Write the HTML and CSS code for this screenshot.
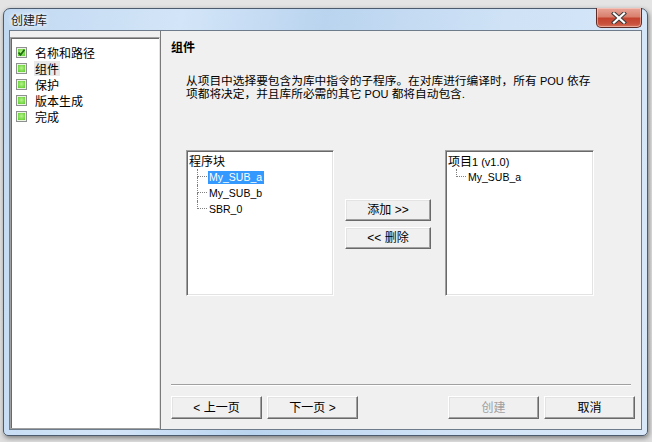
FILE: index.html
```html
<!DOCTYPE html>
<html lang="zh-CN">
<head>
<meta charset="utf-8">
<title>创建库</title>
<link rel="stylesheet" href="styles.css">
</head>
<body>
<div class="window">
  <div class="titlebar">
    <span class="title">创建库</span>
    <div class="close">
      <svg width="16" height="12" viewBox="0 0 16 12">
        <path d="M3 1.5 L13 10.5 M13 1.5 L3 10.5" stroke="#3b3b3b" stroke-width="4.2" stroke-linecap="square" fill="none"/>
        <path d="M3 1.5 L13 10.5 M13 1.5 L3 10.5" stroke="#ffffff" stroke-width="2.2" stroke-linecap="square" fill="none"/>
      </svg>
    </div>
  </div>
  <div class="client">
    <div class="nav">
      <div class="nav-item"><span class="check checked"><svg width="9" height="9" viewBox="0 0 9 9"><path d="M1.5 4.5 L3.5 6.8 L7.5 1.8" stroke="#1d6b12" stroke-width="1.8" fill="none"/></svg></span><span class="nav-label">名称和路径</span></div>
      <div class="nav-item"><span class="check"></span><span class="nav-label current">组件</span></div>
      <div class="nav-item"><span class="check"></span><span class="nav-label">保护</span></div>
      <div class="nav-item"><span class="check"></span><span class="nav-label">版本生成</span></div>
      <div class="nav-item"><span class="check"></span><span class="nav-label">完成</span></div>
    </div>
    <div class="main">
      <div class="heading">组件</div>
      <div class="desc">
        <div class="desc-line">从项目中选择要包含为库中指令的子程序。在对库进行编译时，所有 <span class="pou">POU</span> 依存</div>
        <div class="desc-line">项都将决定，并且库所必需的其它 <span class="pou">POU</span> 都将自动包含.</div>
      </div>
      <div class="picker">
        <div class="listbox left-list">
          <div class="tree-root">程序块</div>
          <div class="tree-row"><span class="conn"><span class="conn-top"></span><span class="conn-bot"></span></span><span class="leaf selected">My_SUB_a</span></div>
          <div class="tree-row"><span class="conn"><span class="conn-top"></span><span class="conn-bot"></span></span><span class="leaf">My_SUB_b</span></div>
          <div class="tree-row"><span class="conn last"><span class="conn-top"></span><span class="conn-bot"></span></span><span class="leaf">SBR_0</span></div>
        </div>
        <div class="move-buttons">
          <button class="btn move">添加 &gt;&gt;</button>
          <button class="btn move">&lt;&lt; 删除</button>
        </div>
        <div class="listbox right-list">
          <div class="tree-root">项目<span class="latin">1 (v1.0)</span></div>
          <div class="tree-row"><span class="conn last"><span class="conn-top"></span><span class="conn-bot"></span></span><span class="leaf">My_SUB_a</span></div>
        </div>
      </div>
      <div class="fill"></div>
      <div class="separator"></div>
      <div class="footer">
        <button class="btn page">&lt; 上一页</button>
        <button class="btn page">下一页 &gt;</button>
        <div class="footer-gap"></div>
        <button class="btn page disabled">创建</button>
        <button class="btn page">取消</button>
      </div>
    </div>
  </div>
</div>
</body>
</html>
```
FILE: styles.css
```css
* { box-sizing: border-box; }
html, body { margin: 0; padding: 0; }
body {
  width: 652px;
  height: 442px;
  overflow: hidden;
  background: linear-gradient(180deg, #e4e4e4 0%, #dedede 100%);
  font-family: "Liberation Sans", "Noto Sans CJK SC", sans-serif;
  font-size: 12px;
  color: #000;
}
.window {
  margin: 8px 0 0 3px;
  width: 645px;
  height: 428px;
  border: 1px solid #4c5c6e;
  border-radius: 7px 7px 5px 5px;
  background: linear-gradient(100deg, #c1d9f1 0%, #d3e5f8 25%, #bad4ef 45%, #cfe2f6 70%, #d8e8f9 100%);
  display: flex;
  flex-direction: column;
  padding: 0 5px 5px 5px;
  box-shadow: 1px 2px 5px rgba(0, 0, 0, 0.45);
}
.titlebar {
  height: 21px;
  flex: none;
  display: flex;
  align-items: flex-start;
  justify-content: space-between;
}
.title {
  font-family: "Noto Sans CJK SC", sans-serif;
  font-size: 12px;
  line-height: 14px;
  padding: 4px 0 0 2px;
  color: #1a1a1a;
  text-shadow: 0 0 4px #ffffff, 0 0 6px #ffffff;
}
.close {
  width: 46px;
  height: 20px;
  margin-top: -1px;
  border: 1px solid #5e2c27;
  border-top: none;
  border-radius: 0 0 5px 5px;
  background: linear-gradient(180deg, #e9a699 0%, #d9806f 45%, #c4432f 55%, #c9543f 85%, #d87a62 100%);
  box-shadow: inset 0 0 0 1px rgba(255, 220, 210, 0.5);
  display: flex;
  align-items: center;
  justify-content: center;
}
.client {
  flex: 1;
  display: flex;
  border: 1px solid #6d7b8b;
  background: #f0f0f0;
}
.nav {
  width: 150px;
  flex: none;
  margin-top: 6px;
  background: #fff;
  border-style: solid;
  border-width: 1px;
  border-color: #a0a0a0 #e3e3e3 #a0a0a0 #a0a0a0;
  box-shadow: inset 1px 1px 0 #696969;
  padding: 6px 0 0 5px;
}
.nav-item {
  height: 16px;
  display: flex;
  align-items: center;
}
.check {
  width: 11px;
  height: 11px;
  flex: none;
  border: 1px solid #8e8f8f;
  background: radial-gradient(circle at 50% 45%, #b8f28f 0%, #7fdc4f 45%, #47be1e 100%);
  box-shadow: inset 0 0 0 1px #e9f5e1;
  display: flex;
  align-items: center;
  justify-content: center;
}
.nav-label {
  margin-left: 7px;
  padding: 0 1px;
  font-family: "Noto Sans CJK SC", sans-serif;
  font-size: 12px;
  line-height: 15px;
}
.nav-label.current { background: #e9e9e9; }
.main {
  flex: 1;
  display: flex;
  flex-direction: column;
  padding: 8px 0 10px 10px;
  border-left: 1px solid #7a7a7a;
}
.heading {
  font-family: "Noto Sans CJK SC", sans-serif;
  font-weight: bold;
  font-size: 12px;
  line-height: 16px;
}
.desc {
  margin: 19px 0 0 15px;
  font-family: "Liberation Sans", "Noto Sans CJK SC", sans-serif;
  font-size: 11.7px;
  white-space: nowrap;
}
.desc-line {
  height: 13px;
  line-height: 13px;
}
.pou {
  font-size: 11px;
}
.picker {
  display: flex;
  align-items: flex-start;
  margin: 50px 0 0 15px;
}
.listbox {
  height: 146px;
  background: #fff;
  border-style: solid;
  border-width: 1px;
  border-color: #a0a0a0 #ffffff #ffffff #a0a0a0;
  box-shadow: inset 1px 1px 0 #696969, inset -1px -1px 0 #e3e3e3;
  padding: 2px 0 0 2px;
  font-size: 11px;
}
.left-list { width: 148px; }
.right-list { width: 149px; margin-left: 14px; }
.tree-root {
  height: 16px;
  line-height: 16px;
  font-family: "Noto Sans CJK SC", sans-serif;
  font-size: 12px;
}
.latin {
  font-family: "Liberation Sans", sans-serif;
  font-size: 11px;
}
.tree-row {
  height: 16px;
  display: flex;
  align-items: center;
  padding-left: 8px;
}
.conn {
  width: 10px;
  height: 16px;
  flex: none;
  display: flex;
  flex-direction: column;
  align-self: flex-start;
}
.conn-top {
  height: 8px;
  border-left: 1px dotted #808080;
  border-bottom: 1px dotted #808080;
}
.conn-bot {
  height: 8px;
  border-left: 1px dotted #808080;
}
.conn.last .conn-bot { border-left: none; }
.leaf {
  margin-left: 1px;
  padding: 0 2px 0 1px;
  height: 13px;
  line-height: 13px;
  font-size: 10.5px;
}
.leaf.selected { background: #3399ff; color: #fff; }
.move-buttons {
  display: flex;
  flex-direction: column;
  gap: 6px;
  margin: 49px 0 0 11px;
}
.btn {
  font-family: "Liberation Sans", "Noto Sans CJK SC", sans-serif;
  font-size: 12px;
  color: #000;
  background: #f0f0f0;
  border-style: solid;
  border-width: 1px;
  border-color: #ffffff #696969 #696969 #ffffff;
  box-shadow: inset -1px -1px 0 #a0a0a0, inset 1px 1px 0 #e3e3e3;
  padding: 0;
  margin: 0;
  line-height: 14px;
}
.btn.move { width: 86px; height: 22px; }
.fill { flex: 1; }
.separator {
  height: 2px;
  margin-right: 10px;
  border-top: 1px solid #a0a0a0;
  border-bottom: 1px solid #ffffff;
  margin-bottom: 10px;
}
.footer {
  display: flex;
  gap: 4px;
  padding-right: 6px;
}
.footer-gap { flex: 1; }
.btn.page { width: 91px; height: 23px; }
.btn.page + .btn.page { margin-left: 1px; }
.btn.disabled { color: #a0a0a0; }
```
